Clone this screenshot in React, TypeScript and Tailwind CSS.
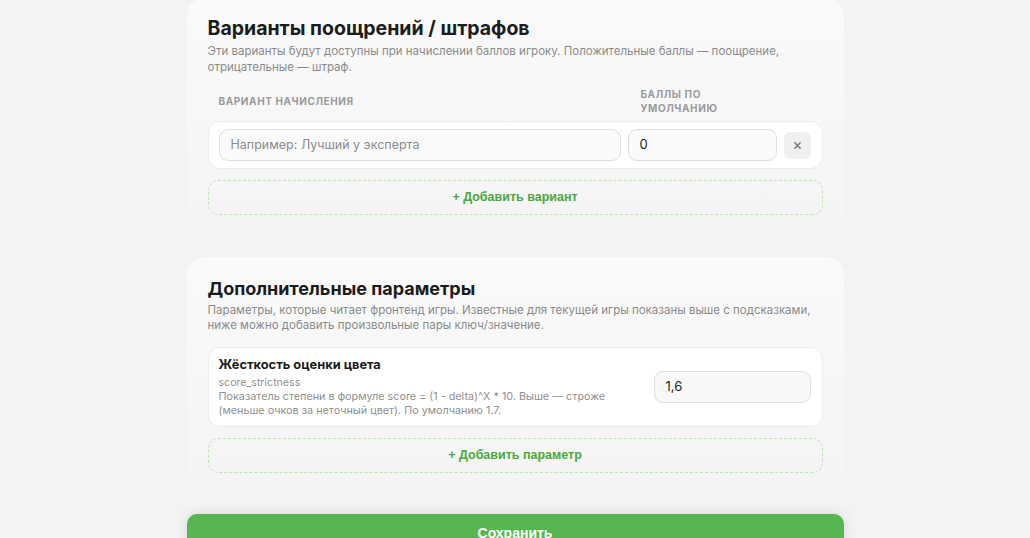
import React from "react";

const sans = { fontFamily: "Inter, 'Noto Sans', sans-serif" };
const btnFont = { fontFamily: "'Liberation Sans', Arial, sans-serif" };

function AddButton({ label }: { label: string }) {
  return (
    <button
      style={btnFont}
      className="flex h-[35px] w-full items-center justify-center rounded-[10px] border border-dashed border-[#bfe3b6] text-[12.5px] font-bold text-[#4aa93c]"
    >
      + {label}
    </button>
  );
}

export default function App() {
  return (
    <div style={sans} className="min-h-[538px] w-full overflow-hidden bg-[#f3f3f3]">
      <div className="mx-auto -mt-[2px] flex w-[657px] flex-col">
        {/* Card 1 */}
        <section className="rounded-[18px] bg-gradient-to-b from-[#fafafa] to-[#f4f4f4] px-[21px] pb-[21px] pt-[16px]">
          <h2 className="text-[19.5px] font-bold leading-[28px] text-[#1c1c1c]">
            Варианты поощрений / штрафов
          </h2>
          <p className="mt-[1px] text-[11.5px] leading-[16px] text-[#8a8a8a]">
            Эти варианты будут доступны при начислении баллов игроку. Положительные баллы — поощрение,
            отрицательные — штраф.
          </p>
          <div className="mt-[12px] flex items-center px-[11px] text-[10px] font-bold uppercase leading-[14px] tracking-[0.06em] text-[#9a9a9a]">
            <div className="flex-1">Вариант начисления</div>
            <div className="ml-[7px] w-[149px] pl-[12px]">
              Баллы по
              <br />
              умолчанию
            </div>
            <div className="ml-[7px] w-[27px]" />
          </div>
          <div className="mt-[6px] flex items-center gap-[7px] rounded-[12px] border border-[#ececec] bg-white py-[7px] pl-[10px] pr-[11px]">
            <div className="flex h-[32px] flex-1 items-center rounded-[9px] border border-[#dedede] bg-[#fafafa] px-[11px] text-[12.5px] text-[#8c8c8c]">
              Например: Лучший у эксперта
            </div>
            <div className="flex h-[32px] w-[149px] items-center rounded-[9px] border border-[#dedede] bg-[#fafafa] px-[11px] text-[13px] text-[#1c1c1c]">
              0
            </div>
            <div className="flex h-[27px] w-[27px] items-center justify-center rounded-[6px] bg-[#f0f0f0] text-[#7a7a7a]">
              <svg width="9" height="9" viewBox="0 0 10 10" fill="none" stroke="currentColor" strokeWidth="1.7" strokeLinecap="round">
                <path d="M2 2l6 6M8 2l-6 6" />
              </svg>
            </div>
          </div>
          <div className="mt-[11px]">
            <AddButton label="Добавить вариант" />
          </div>
        </section>

        {/* Card 2 */}
        <section className="mt-[21px] rounded-[18px] bg-gradient-to-b from-[#fafafa] to-[#f4f4f4] px-[21px] pb-[21px] pt-[18px]">
          <h2 className="text-[18px] font-bold leading-[28px] text-[#1c1c1c]">
            Дополнительные параметры
          </h2>
          <p className="text-[11.5px] leading-[15px] text-[#8a8a8a]">
            Параметры, которые читает фронтенд игры. Известные для текущей игры показаны выше с подсказками,
            ниже можно добавить произвольные пары ключ/значение.
          </p>
          <div className="mt-[14px] flex items-center rounded-[12px] border border-[#ececec] bg-white py-[8px] pl-[10px] pr-[11px]">
            <div className="flex-1 pr-[40px]">
              <div className="text-[12.8px] font-bold leading-[18px] text-[#1c1c1c]">Жёсткость оценки цвета</div>
              <div className="mt-[1px] text-[10.6px] leading-[15px] text-[#8f8f8f]">score_strictness</div>
              <div className="text-[10.8px] leading-[14px] text-[#8f8f8f]">
                Показатель степени в формуле score = (1 - delta)^X * 10. Выше — строже (меньше очков за неточный цвет). По умолчанию 1.7.
              </div>
            </div>
            <div className="flex h-[32px] w-[157px] items-center rounded-[9px] border border-[#dedede] bg-[#f8f8f8] px-[11px] text-[13px] text-[#1c1c1c]">
              1,6
            </div>
          </div>
          <div className="mt-[11px]">
            <AddButton label="Добавить параметр" />
          </div>
        </section>

        <button
          style={btnFont}
          className="mt-[20px] flex h-[40px] w-full items-start justify-center rounded-[10px] bg-[#57b650] pt-[9px] text-[14px] font-bold text-white shadow-[0_0_12px_rgba(0,0,0,0.12)]"
        >
          Сохранить
        </button>
      </div>
    </div>
  );
}
